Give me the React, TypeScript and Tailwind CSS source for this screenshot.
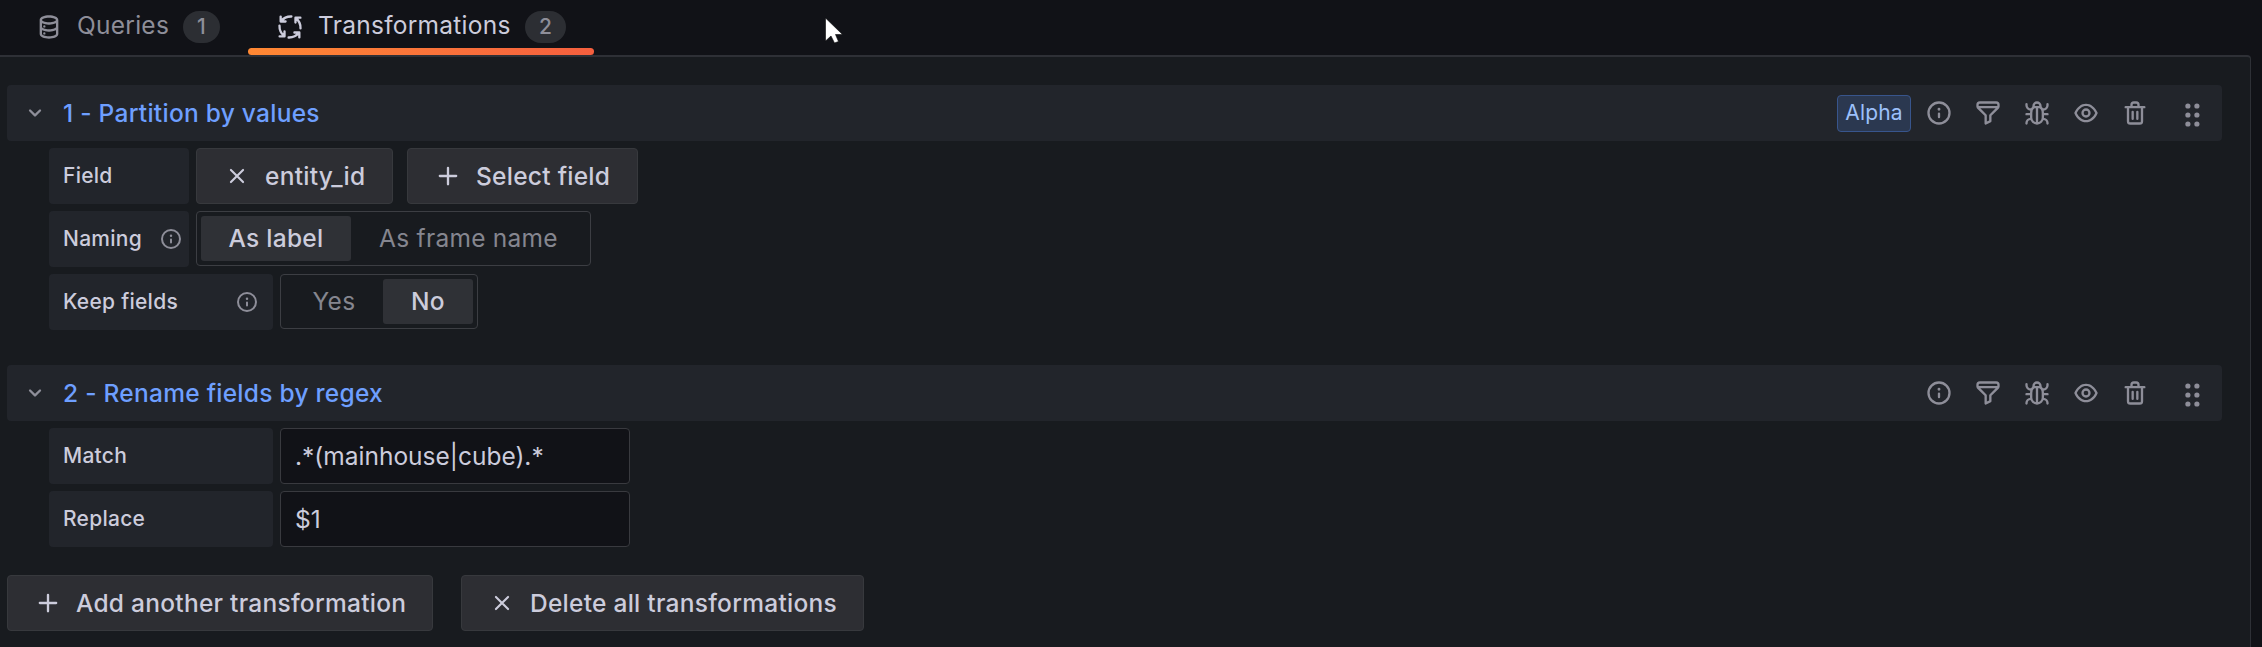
import React from 'react';

const ICONS: Record<string, string> = {
  info: 'M12,2A10,10,0,1,0,22,12,10.01114,10.01114,0,0,0,12,2Zm0,18a8,8,0,1,1,8-8A8.00917,8.00917,0,0,1,12,20Zm0-8.5a1,1,0,0,0-1,1v3a1,1,0,0,0,2,0v-3A1,1,0,0,0,12,11.5Zm0-4a1.25,1.25,0,1,0,1.25,1.25A1.25,1.25,0,0,0,12,7.5Z',
  filter: 'M19,2H5A3,3,0,0,0,2,5V6.17a3,3,0,0,0,.25,1.2l0,.06a2.81,2.81,0,0,0,.59.86L9,14.41V21a1,1,0,0,0,.47.85A1,1,0,0,0,10,22a1,1,0,0,0,.45-.11l4-2A1,1,0,0,0,15,19V14.41l6.12-6.12a2.81,2.81,0,0,0,.59-.86l0-.06A3,3,0,0,0,22,6.17V5A3,3,0,0,0,19,2ZM13.29,13.29A1,1,0,0,0,13,14v4.38l-2,1V14a1,1,0,0,0-.29-.71L5.41,8H18.59ZM20,6H4V5A1,1,0,0,1,5,4H19a1,1,0,0,1,1,1Z',
  eye: 'M21.92,11.6C19.9,6.91,16.1,4,12,4S4.1,6.91,2.08,11.6a1,1,0,0,0,0,.8C4.1,17.09,7.9,20,12,20s7.9-2.91,9.92-7.6A1,1,0,0,0,21.92,11.6ZM12,18c-3.17,0-6.17-2.29-7.9-6C5.83,8.29,8.83,6,12,6s6.17,2.29,7.9,6C18.17,15.71,15.17,18,12,18ZM12,8a4,4,0,1,0,4,4A4,4,0,0,0,12,8Zm0,6a2,2,0,1,1,2-2A2,2,0,0,1,12,14Z',
  trash: 'M10,18a1,1,0,0,0,1-1V11a1,1,0,0,0-2,0v6A1,1,0,0,0,10,18ZM20,6H16V5a3,3,0,0,0-3-3H11A3,3,0,0,0,8,5V6H4A1,1,0,0,0,4,8H5V19a3,3,0,0,0,3,3h8a3,3,0,0,0,3-3V8h1a1,1,0,0,0,0-2ZM10,5a1,1,0,0,1,1-1h2a1,1,0,0,1,1,1V6H10Zm7,14a1,1,0,0,1-1,1H8a1,1,0,0,1-1-1V8H17Zm-3-1a1,1,0,0,0,1-1V11a1,1,0,0,0-2,0v6A1,1,0,0,0,14,18Z',
  angle: 'M17,9.17a1,1,0,0,0-1.41,0L12,12.71,8.46,9.17a1,1,0,0,0-1.41,0,1,1,0,0,0,0,1.42l4.24,4.24a1,1,0,0,0,1.42,0L17,10.59A1,1,0,0,0,17,9.17Z',
  plus: 'M19,11H13V5a1,1,0,0,0-2,0v6H5a1,1,0,0,0,0,2h6v6a1,1,0,0,0,2,0V13h6a1,1,0,0,0,0-2Z',
  database: 'M8,16.5a1,1,0,1,0,1,1A1,1,0,0,0,8,16.5ZM12,2C8,2,4,3.37,4,6V18c0,2.63,4,4,8,4s8-1.37,8-4V6C20,3.37,16,2,12,2Zm6,16c0,.71-2.28,2-6,2s-6-1.29-6-2V14.73A13.16,13.16,0,0,0,12,16a13.16,13.16,0,0,0,6-1.27Zm0-6c0,.71-2.28,2-6,2s-6-1.29-6-2V8.73A13.16,13.16,0,0,0,12,10a13.16,13.16,0,0,0,6-1.27ZM12,8C8.28,8,6,6.71,6,6s2.28-2,6-2,6,1.29,6,2S15.72,8,12,8ZM8,10.5a1,1,0,1,0,1,1A1,1,0,0,0,8,10.5Z',
};

function Icon({ name, className }: { name: string; className: string }) {
  const cls = `shrink-0 ${className}`;
  const stroke = {
    fill: 'none',
    stroke: 'currentColor',
    strokeWidth: 2,
    strokeLinecap: 'round',
    strokeLinejoin: 'round',
  } as const;
  if (name === 'process') {
    return (
      <svg viewBox="0 0 24 24" className={cls} {...stroke}>
        {[0, 90, 180, 270].map((angle) => (
          <path key={angle} transform={`rotate(${angle} 12 12)`} d="M4 3.100V7.300H8.200M4.300 7A11 11 0 0 1 13.200 3" />
        ))}
      </svg>
    );
  }
  if (name === 'times') {
    return (
      <svg viewBox="0 0 24 24" className={cls} {...stroke} strokeWidth={1.8}>
        <path d="M6.800 6.800 17.200 17.200M17.200 6.800 6.800 17.200" />
      </svg>
    );
  }
  if (name === 'bug') {
    return (
      <svg viewBox="0 0 24 24" className={cls} {...stroke}>
        <path d="M9.500 7h5C16.200 7.800 17 9.600 17 12v4a5 5 0 0 1-10 0v-4C7 9.600 7.800 7.800 9.500 7ZM12 7.500V20.500" />
        <path d="M9 6.500V6a3 3 0 0 1 6 0v.5" />
        <path d="M3 13h3.500M17.500 13H21M3 4.500v.8A3.600 3.600 0 0 0 6.600 9M21 4.500v.8A3.600 3.600 0 0 1 17.400 9M3 21v-.5A3.600 3.600 0 0 1 6.600 17M21 21v-.5A3.600 3.600 0 0 0 17.400 17" />
      </svg>
    );
  }
  return (
    <svg viewBox="0 0 24 24" className={cls} fill="currentColor">
      <path d={ICONS[name]} />
    </svg>
  );
}

function DragDots() {
  return (
    <svg viewBox="0 0 16 24" className="mt-[3px] ml-[35px] h-6 w-4 shrink-0" fill="currentColor">
      {[3, 12, 21].map((y) => (
        <g key={y}>
          <circle cx="3.9" cy={y} r="2.6" />
          <circle cx="12.9" cy={y} r="2.6" />
        </g>
      ))}
    </svg>
  );
}

function RowHeader({ title, alpha }: { title: string; alpha?: boolean }) {
  return (
    <div className="flex h-14 items-center rounded-[4px] bg-[#22252b] pr-[22px] text-[#8e8e99]">
      <Icon name="angle" className="ml-[14px] size-7" />
      <h2 className="ml-[14px] flex-1 text-[24.5px] font-medium text-[#6e9fff]">{title}</h2>
      {alpha && (
        <span className="mr-[14px] flex h-[37px] w-[74px] items-center justify-center rounded-[4px] border border-[#38558c] bg-[#2b3850] text-[21px] tracking-[0.17px] text-[#9cc0fb]">
          Alpha
        </span>
      )}
      <div className="flex items-center gap-[21px]">
        {['info', 'filter', 'bug', 'eye', 'trash'].map((n) => (
          <Icon key={n} name={n} className="size-7" />
        ))}
      </div>
      <DragDots />
    </div>
  );
}

function Label({ text, wide, info }: { text: string; wide?: boolean; info?: boolean }) {
  return (
    <div
      className={`flex h-14 shrink-0 items-center justify-between rounded-[4px] bg-[#22252b] pl-[14px] text-[21px] font-medium ${
        wide ? 'w-[224px] pr-[14px]' : 'w-[140px] pr-[6px]'
      }`}
    >
      {text}
      {info && <Icon name="info" className="size-6 text-[#8e8e99]" />}
    </div>
  );
}

function Button({ icon, text, className }: { icon: string; text: string; className: string }) {
  return (
    <button className={`flex h-14 items-center rounded-[4px] border border-[#37393d] bg-[#2d2e33] pl-[26px] text-[24.5px] font-medium tracking-[0.01071em] whitespace-nowrap ${className}`}>
      <Icon name={icon} className="mr-[14px] size-7" />
      {text}
    </button>
  );
}

function Radio({ options, selected, className }: { options: [string, string][]; selected: string; className: string }) {
  return (
    <div className={`flex h-[55px] items-center rounded-[4px] border border-[#3c3e43] p-1 text-[24.5px] ${className}`}>
      {options.map(([label, width]) => (
        <div
          key={label}
          className={`flex h-[45px] items-center justify-center rounded-[3px] whitespace-nowrap ${width} ${
            label === selected ? 'bg-[#2f3136] font-medium' : 'text-[#85868f]'
          }`}
        >
          {label}
        </div>
      ))}
    </div>
  );
}

function TextField({ value }: { value: string }) {
  return (
    <div className="flex h-14 w-[350px] items-center rounded-[4px] border border-[#393a3f] bg-[#111217] pl-[14px] text-[24.5px] tracking-normal">
      {value}
    </div>
  );
}

function Badge({ text, className }: { text: string; className: string }) {
  return (
    <span className={`flex h-8 items-center justify-center rounded-full bg-[#2c2e33] text-[21px] font-medium text-[#8e8e99] ${className}`}>
      {text}
    </span>
  );
}

export default function App() {
  return (
    <div className="relative flex h-[647px] w-[2262px] flex-col overflow-hidden bg-[#111217] font-[Inter,sans-serif] tracking-[0.2624px] text-[#ccccdc]">
      <nav className="flex h-[55px] shrink-0 text-[24.5px]">
        <div className="flex h-[54px] w-[248px] items-center pl-[35px] text-[#8e8e99]">
          <Icon name="database" className="size-7" />
          <span className="ml-[14px] flex-1 pb-[3px]">Queries</span>
          <Badge text="1" className="mr-7 w-[37px]" />
        </div>
        <div className="flex w-[346px] flex-col">
          <div className="flex h-12 items-center pt-[6px] pl-7">
            <Icon name="process" className="size-7" />
            <span className="ml-[14px] flex-1 pb-[3px] whitespace-nowrap">Transformations</span>
            <Badge text="2" className="mr-7 w-[41px]" />
          </div>
          <div className="h-[7px] rounded-[4px] bg-linear-to-r from-[#ff8833] to-[#f55f3e]" />
        </div>
      </nav>
      <main className="flex w-[2251px] flex-1 flex-col rounded-tr-[4px] border-t-2 border-r border-[#2e3036] bg-[#181b1f] pt-7 pr-[28px] pl-[7px]">
        <RowHeader title="1 - Partition by values" alpha />
        <div className="mt-[7px] flex flex-col gap-[7px] pl-[42px]">
          <div className="flex">
            <Label text="Field" />
            <Button icon="times" text="entity_id" className="ml-[7px] w-[197px]" />
            <Button icon="plus" text="Select field" className="ml-[14px] w-[231px]" />
          </div>
          <div className="flex gap-[7px]">
            <Label text="Naming" info />
            <Radio options={[['As label', 'w-[150px]'], ['As frame name', 'w-[235px]']]} selected="As label" className="w-[395px]" />
          </div>
          <div className="flex gap-[7px]">
            <Label text="Keep fields" wide info />
            <Radio options={[['Yes', 'w-[98px]'], ['No', 'w-[90px]']]} selected="No" className="w-[198px]" />
          </div>
        </div>
        <div className="mt-[35px]">
          <RowHeader title="2 - Rename fields by regex" />
        </div>
        <div className="mt-[7px] flex flex-col gap-[7px] pl-[42px]">
          <div className="flex gap-[7px]">
            <Label text="Match" wide />
            <TextField value=".*(mainhouse|cube).*" />
          </div>
          <div className="flex gap-[7px]">
            <Label text="Replace" wide />
            <TextField value="$1" />
          </div>
        </div>
        <div className="mt-7 flex gap-7">
          <Button icon="plus" text="Add another transformation" className="w-[426px]" />
          <Button icon="times" text="Delete all transformations" className="w-[403px]" />
        </div>
      </main>
      <svg viewBox="0 0 18 27" className="absolute top-[17px] left-[825px] h-[27px] w-[18px]">
        <path d="M.5 1v23l5.500-5L9.500 26l4-1.500-3-7h7Z" fill="#fff" stroke="#08080a" strokeWidth="0.6" />
      </svg>
    </div>
  );
}
